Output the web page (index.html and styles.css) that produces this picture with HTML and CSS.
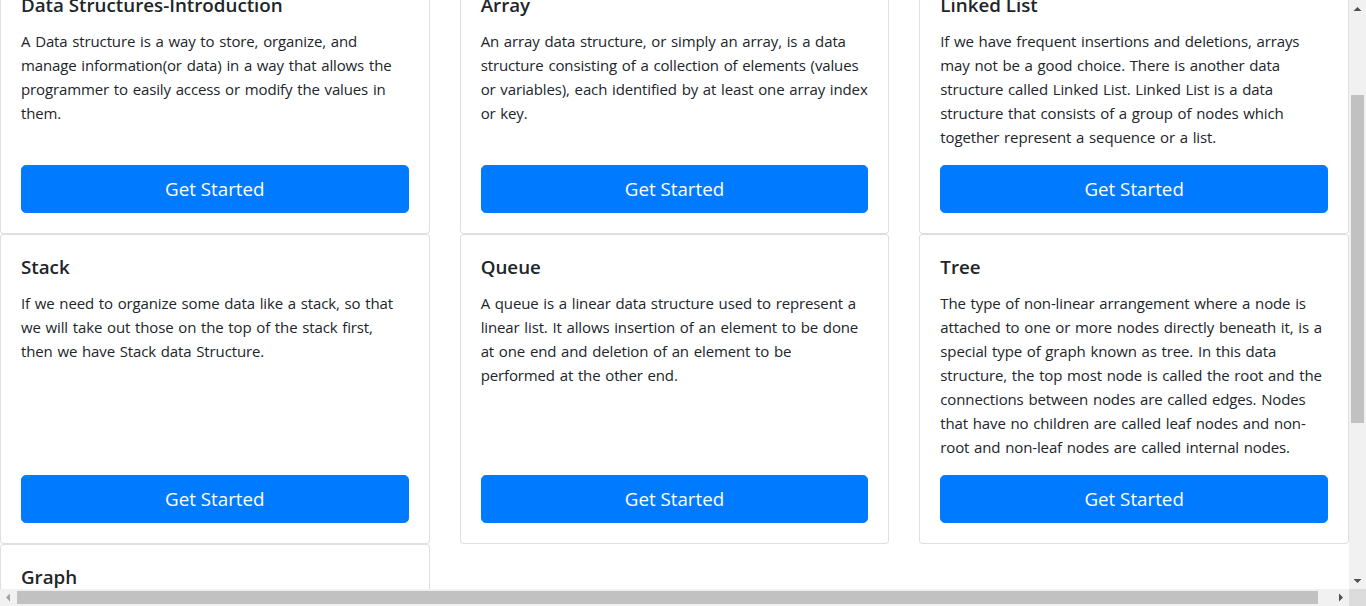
FILE: index.html
```html
<!DOCTYPE html>
<html lang="en">
<head>
<meta charset="utf-8">
<title>Data Structures</title>
<link rel="stylesheet" href="styles.css">
</head>
<body>
<div class="window">
  <div class="viewport">
    <div class="page">
      <div class="row">
        <div class="col">
          <div class="card"><div class="card-body">
            <h5 class="card-title">Data Structures-Introduction</h5>
            <p class="card-text">A Data structure is a way to store, organize, and manage information(or data) in a way that allows the programmer to easily access or modify the values in them.</p>
            <a class="btn" href="#">Get Started</a>
          </div></div>
        </div>
        <div class="col">
          <div class="card"><div class="card-body">
            <h5 class="card-title">Array</h5>
            <p class="card-text">An array data structure, or simply an array, is a data structure consisting of a collection of elements (values or variables), each identified by at least one array index or key.</p>
            <a class="btn" href="#">Get Started</a>
          </div></div>
        </div>
        <div class="col">
          <div class="card"><div class="card-body">
            <h5 class="card-title">Linked List</h5>
            <p class="card-text">If we have frequent insertions and deletions, arrays may not be a good choice. There is another data structure called Linked List. Linked List is a data structure that consists of a group of nodes which together represent a sequence or a list.</p>
            <a class="btn" href="#">Get Started</a>
          </div></div>
        </div>
        <div class="col">
          <div class="card"><div class="card-body">
            <h5 class="card-title">Stack</h5>
            <p class="card-text">If we need to organize some data like a stack, so that we will take out those on the top of the stack first, then we have Stack data Structure.</p>
            <a class="btn" href="#">Get Started</a>
          </div></div>
        </div>
        <div class="col">
          <div class="card"><div class="card-body">
            <h5 class="card-title">Queue</h5>
            <p class="card-text">A queue is a linear data structure used to represent a linear list. It allows insertion of an element to be done at one end and deletion of an element to be performed at the other end.</p>
            <a class="btn" href="#">Get Started</a>
          </div></div>
        </div>
        <div class="col">
          <div class="card"><div class="card-body">
            <h5 class="card-title">Tree</h5>
            <p class="card-text">The type of non-linear arrangement where a node is attached to one or more nodes directly beneath it, is a special type of graph known as tree. In this data structure, the top most node is called the root and the connections between nodes are called edges. Nodes that have no children are called leaf nodes and non-root and non-leaf nodes are called internal nodes.</p>
            <a class="btn" href="#">Get Started</a>
          </div></div>
        </div>
        <div class="col">
          <div class="card"><div class="card-body">
            <h5 class="card-title">Graph</h5>
            <p class="card-text">A Graph is a non-linear data structure consisting of nodes and edges. The nodes are sometimes also referred to as vertices and the edges are lines or arcs that connect any two nodes in the graph.</p>
            <a class="btn" href="#">Get Started</a>
          </div></div>
        </div>
      </div>
    </div>
  </div>
  <div class="vscroll">
    <div class="arrow">
      <svg width="17" height="17" viewBox="0 0 17 17"><path d="M4.5 11 L8.5 7 L12.5 11 Z" fill="#505050"/></svg>
    </div>
    <div class="vtrack"><div class="vthumb"></div></div>
    <div class="arrow">
      <svg width="17" height="17" viewBox="0 0 17 17"><path d="M4.5 7 L8.5 11 L12.5 7 Z" fill="#505050"/></svg>
    </div>
  </div>
  <div class="hscroll">
    <div class="arrow">
      <svg width="17" height="17" viewBox="0 0 17 17"><path d="M10 4.5 L6 8.5 L10 12.5 Z" fill="#a3a3a3"/></svg>
    </div>
    <div class="htrack"><div class="hthumb"></div></div>
    <div class="arrow">
      <svg width="17" height="17" viewBox="0 0 17 17"><path d="M7 4.5 L11 8.5 L7 12.5 Z" fill="#505050"/></svg>
    </div>
  </div>
  <div class="corner"></div>
</div>
</body>
</html>
```
FILE: styles.css
```css
* { box-sizing: border-box; }
html, body { margin: 0; padding: 0; height: 100%; overflow: hidden; }
body {
  font-family: "Segoe UI", "Open Sans", "Noto Sans", sans-serif;
  font-size: 15px;
  line-height: 24px;
  color: #212529;
  background: #fff;
}
.window {
  display: grid;
  grid-template-columns: 1fr 17px;
  grid-template-rows: 1fr 17px;
  height: 100vh;
}
.viewport { overflow: hidden; background: #fff; }
.page { margin-top: -28px; }
.row { display: flex; flex-wrap: wrap; margin: 0 -15px; }
.col { flex: 0 0 33.333333%; max-width: 33.333333%; padding: 0 15px; }
.card {
  height: 100%;
  display: flex;
  flex-direction: column;
  background: #fff;
  border: 1px solid rgba(0,0,0,.125);
  border-radius: 4px;
}
.card-body { flex: 1 1 auto; padding: 20px; display: flex; flex-direction: column; }
.card-title { margin: 0 0 12px; font-size: 18.75px; font-weight: 600; line-height: 24px; }
.card-text { margin: 0 0 16px; letter-spacing: -0.128px; word-spacing: 1px; }
.btn {
  display: block;
  margin-top: auto;
  padding: 8px 16px;
  font-size: 18.75px;
  line-height: 30px;
  text-align: center;
  color: #fff;
  text-decoration: none;
  background: #007bff;
  border: 1px solid #007bff;
  border-radius: 4.8px;
}
.vscroll { display: flex; flex-direction: column; background: #f1f1f1; }
.hscroll { display: flex; background: #f1f1f1; }
.arrow { flex: 0 0 17px; height: 17px; width: 17px; }
.arrow svg { display: block; }
.vtrack { flex: 1; padding: 0 2px; }
.vthumb { margin-top: 78px; height: 328px; background: #c1c1c1; }
.htrack { flex: 1; padding: 2px 0; }
.hthumb { width: 1301px; height: 13px; background: #c1c1c1; }
.corner { background: #dcdcdc; }
```
